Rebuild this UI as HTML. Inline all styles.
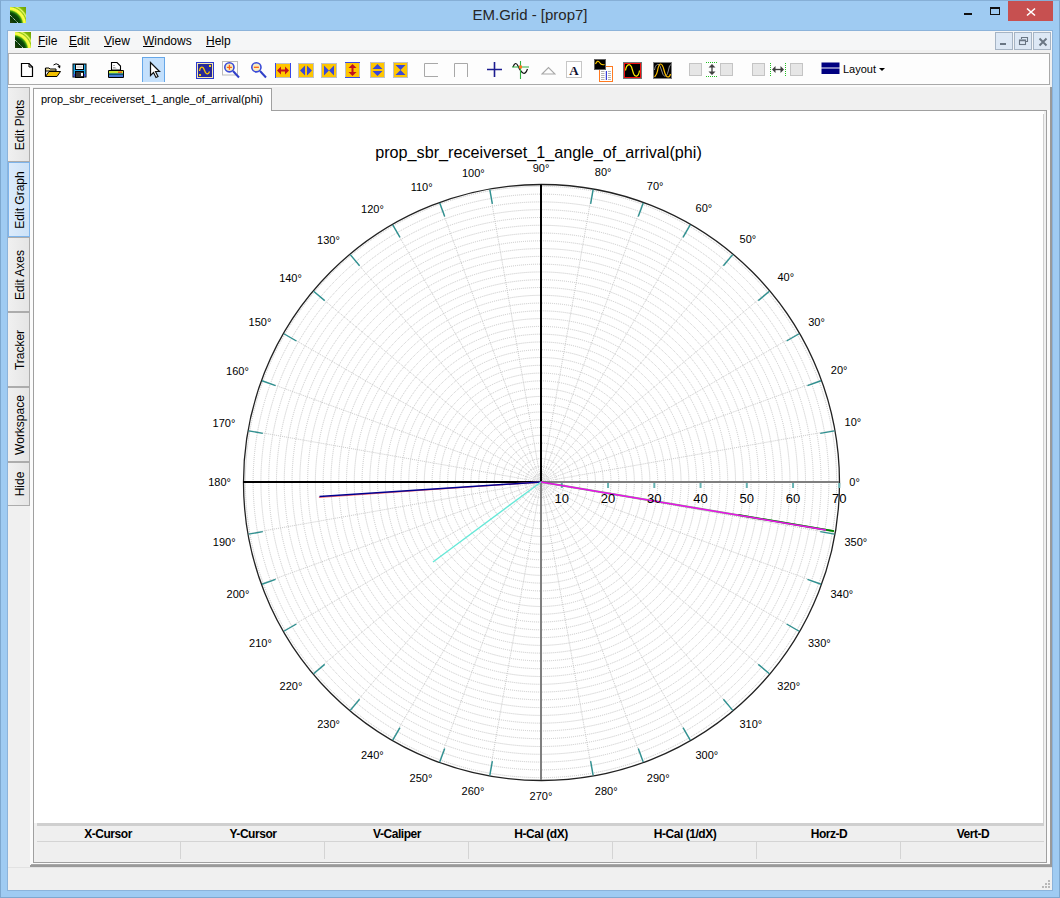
<!DOCTYPE html>
<html><head><meta charset="utf-8">
<style>
*{margin:0;padding:0;box-sizing:border-box}
html,body{width:1060px;height:898px;overflow:hidden;background:#9fcbf2;font-family:"Liberation Sans",sans-serif;position:relative}
.a{position:absolute}
.frame{left:0;top:0;width:1060px;height:898px;border:1px solid #7ea8cf;border-top-color:#86afd6}
.ttl{left:0;top:5px;width:1060px;text-align:center;font-size:15px;color:#262626;line-height:20px;padding-left:0}
.client{left:8px;top:31px;width:1044px;height:859px;background:#f0f0f0}
.menubar{left:8px;top:31px;width:1044px;height:19px;background:#f5f6f7}
.menu span{position:absolute;top:34px;font-size:12px;color:#000;line-height:14px}
.menu u{text-decoration:underline;text-underline-offset:1px;text-decoration-thickness:1px}
.toolbar{left:8px;top:53px;width:1042px;height:32px;background:#fdfdfd;border:1px solid #a9a9a9;border-left-color:#b4b4b4}
.vtab{width:22px;background:linear-gradient(to right,#f0f0f0,#e5e5e5);border:1px solid #acacac;border-left:none}
.vtab span{position:absolute;left:50%;top:50%;transform:translate(-50%,-50%) translateX(1.2px) rotate(-90deg);font-size:12px;white-space:nowrap;color:#000;line-height:14px}
.vtab.sel{background:linear-gradient(to right,#dcebfb,#cde2f7);border:1px solid #7eb4ea}
.hdr span{position:absolute;top:827px;font-size:12px;font-weight:bold;letter-spacing:-0.45px;color:#000;transform:translateX(-50%);white-space:nowrap;line-height:14px}
</style></head><body>
<div class="a frame"></div>
<div class="a ttl">EM.Grid - [prop7]</div>
<div class="a" style="left:7px;top:30px;width:1046px;height:861px;background:#8cb3da"></div>
<div class="a client"></div>
<div class="a menubar"></div>
<div class="a" style="left:1008px;top:1px;width:45px;height:20px;background:#c75050"></div>
<svg class="a" style="left:1026px;top:7px" width="10" height="10" viewBox="0 0 10 10"><path d="M1 1.5L9 8.5M9 1.5L1 8.5" stroke="#fff" stroke-width="1.6"/></svg>
<div class="a" style="left:964px;top:13px;width:8px;height:2px;background:#111"></div>
<div class="a" style="left:990px;top:7px;width:10px;height:8px;border:1px solid #111;border-top-width:2px"></div>
<!-- MDI buttons -->
<div class="a" style="left:995px;top:32px;width:18px;height:18px;background:#dde8f5;border:1px solid #a6b4c4"></div>
<div class="a" style="left:1014px;top:32px;width:18px;height:18px;background:#dde8f5;border:1px solid #a6b4c4"></div>
<div class="a" style="left:1033px;top:32px;width:18px;height:18px;background:#dde8f5;border:1px solid #a6b4c4"></div>
<div class="a" style="left:1000px;top:43px;width:6px;height:2px;background:#6a7684"></div>
<svg class="a" style="left:1018px;top:36px" width="11" height="11" viewBox="0 0 11 11"><path d="M3.5 3V1.5H9.5V5.5H7.5" fill="none" stroke="#6a7684" stroke-width="1.1"/><rect x="1.5" y="4" width="6" height="4.5" fill="none" stroke="#6a7684" stroke-width="1.1"/><path d="M1.5 4.6H7.5" stroke="#6a7684" stroke-width="1.3"/></svg>
<svg class="a" style="left:1038px;top:37px" width="10" height="10" viewBox="0 0 10 10"><path d="M1.5 1.5L8.5 8.5M8.5 1.5L1.5 8.5" stroke="#6a7684" stroke-width="1.9"/></svg>
<!-- grip -->
<svg class="a" style="left:1042px;top:880px" width="10" height="10" viewBox="0 0 10 10"><g fill="#b8b8b8"><rect x="6" y="0" width="2" height="2"/><rect x="3" y="3" width="2" height="2"/><rect x="6" y="3" width="2" height="2"/><rect x="0" y="6" width="2" height="2"/><rect x="3" y="6" width="2" height="2"/><rect x="6" y="6" width="2" height="2"/></g></svg>

<div class="menu">
<span style="left:38px"><u>F</u>ile</span>
<span style="left:69px"><u>E</u>dit</span>
<span style="left:104px"><u>V</u>iew</span>
<span style="left:143px"><u>W</u>indows</span>
<span style="left:206px"><u>H</u>elp</span>
</div>
<div class="a toolbar"></div>
<!-- app icons -->
<svg class="a" style="left:10px;top:7px" width="16" height="16" viewBox="0 0 16 16"><defs><radialGradient id="gi" cx="-2" cy="18" r="26" gradientUnits="userSpaceOnUse"><stop offset="0" stop-color="#3a4a10"/><stop offset="0.3" stop-color="#063806"/><stop offset="0.48" stop-color="#0a4a0a"/><stop offset="0.55" stop-color="#40a010"/><stop offset="0.6" stop-color="#f0f838"/><stop offset="0.67" stop-color="#ffff50"/><stop offset="0.72" stop-color="#90c818"/><stop offset="0.76" stop-color="#e8f868"/><stop offset="0.82" stop-color="#80b808"/><stop offset="1" stop-color="#6a9a00"/></radialGradient></defs><rect width="16" height="16" fill="url(#gi)"/><path d="M0 8 L8 16" stroke="#fff" stroke-width="1" stroke-dasharray="1 1"/></svg>
<svg class="a" style="left:15px;top:32px" width="16" height="16" viewBox="0 0 16 16"><rect width="16" height="16" fill="url(#gi)"/><path d="M0 8 L8 16" stroke="#fff" stroke-width="1" stroke-dasharray="1 1"/></svg>
<!-- new -->
<svg class="a" style="left:20px;top:62px" width="14" height="16" viewBox="0 0 14 16"><path d="M1.5 1.5 H9 L12.5 5 V14.5 H1.5 Z" fill="#fff" stroke="#000" stroke-width="1.2"/><path d="M9 1.5 V5 H12.5" fill="none" stroke="#000" stroke-width="1"/></svg>
<!-- open -->
<svg class="a" style="left:44px;top:62px" width="18" height="16" viewBox="0 0 18 16"><path d="M1.5 6 H5 L6 7 H12 V9 H1.5 Z" fill="#f4e6a0" stroke="#000" stroke-width="1"/><path d="M1.5 14.5 V6" stroke="#000" stroke-width="1.2"/><path d="M1.5 14.5 L5 9.5 H16.5 L13 14.5 Z" fill="#f2c000" stroke="#000" stroke-width="1"/><path d="M9.5 3 Q12 0.5 15 3 L15.5 5" fill="none" stroke="#000" stroke-width="1"/><path d="M13.5 4.5 L16 6.5 L16.5 3.5 Z" fill="#000"/></svg>
<!-- save -->
<svg class="a" style="left:72px;top:63px" width="15" height="15" viewBox="0 0 15 15"><rect x="0.5" y="0.5" width="14" height="14" fill="#000"/><rect x="1.5" y="1.5" width="12" height="12" fill="#1ea7e8"/><rect x="1.5" y="11" width="12" height="2.5" fill="#4848d8"/><rect x="3.5" y="1.5" width="8" height="5" fill="#fff" stroke="#000" stroke-width="1"/><rect x="4.5" y="2.5" width="6" height="2.5" fill="#d8d8d8"/><rect x="3.5" y="8.5" width="8" height="6" fill="#333" stroke="#000" stroke-width="1"/><rect x="9" y="10" width="2" height="3" fill="#fff"/></svg>
<!-- print -->
<svg class="a" style="left:107px;top:61px" width="18" height="18" viewBox="0 0 18 18"><path d="M4.5 1.5 H10 L13.5 5 V9 H4.5 Z" fill="#fff" stroke="#000" stroke-width="1.1"/><path d="M6 4.5h2M6 6.5h2.5M6 8h3.5" stroke="#999" stroke-width="0.8"/><rect x="1" y="9" width="16" height="8" rx="1" fill="#000"/><rect x="2" y="10" width="14" height="2.5" fill="#c8e830"/><rect x="11" y="10.5" width="4" height="1.5" fill="#f06020"/><rect x="2" y="12.5" width="14" height="1" fill="#1ea7e8"/><rect x="2" y="14" width="14" height="2" fill="#4878d8"/></svg>
<!-- pointer button -->
<div class="a" style="left:142px;top:57px;width:23px;height:25px;background:#c4e0fc;border:1px solid #66a7e8;border-bottom:none"></div>
<svg class="a" style="left:148px;top:61px" width="14" height="19" viewBox="0 0 14 19"><path d="M2.5 1.5 V14.5 L5.5 11.5 L8 16.5 L10 15.5 L7.5 10.5 H11.5 Z" fill="#fff" stroke="#111" stroke-width="1.2" stroke-linejoin="miter"/></svg>
<!-- sine display -->
<svg class="a" style="left:196px;top:62px" width="18" height="17" viewBox="0 0 18 17"><rect x="0" y="0" width="18" height="17" fill="#2c3cd0"/><rect x="1" y="1" width="16" height="15" fill="#f5e7ac"/><rect x="2" y="2" width="14" height="13" fill="#27299a"/><path d="M3.5 9 C4 5.5 5.5 4.5 7 5.5 C8 6.5 8.5 8.5 9.5 10.5 C10.5 12.5 12.5 12.5 13.5 9.5" fill="none" stroke="#ffc800" stroke-width="1.3"/><rect x="13" y="3" width="2" height="2" fill="#ffd000"/><rect x="3" y="12" width="2" height="2" fill="#ffd000"/></svg>
<!-- zoom in -->
<svg class="a" style="left:222px;top:61px" width="19" height="19" viewBox="0 0 19 19"><rect x="0.5" y="0.5" width="15" height="13.5" fill="none" stroke="#bcbcbc" stroke-width="1"/><circle cx="7.4" cy="6.3" r="4.6" fill="#f6ecc0" stroke="#3a4ad8" stroke-width="1.6"/><path d="M7.4 3.8V8.8M4.9 6.3H9.9" stroke="#ff6010" stroke-width="1.3"/><path d="M11 10 L17 16.5" stroke="#3040c8" stroke-width="2"/></svg>
<!-- zoom out -->
<svg class="a" style="left:249px;top:61px" width="19" height="19" viewBox="0 0 19 19"><circle cx="7.4" cy="6.3" r="4.6" fill="#f6ecc0" stroke="#3a4ad8" stroke-width="1.6"/><path d="M4.9 6.3H9.9" stroke="#ff6010" stroke-width="1.3"/><path d="M11 10 L17 16.5" stroke="#3040c8" stroke-width="2"/></svg>
<!-- orange icons -->
<svg class="a" style="left:275px;top:63px" width="16" height="15" viewBox="0 0 16 15"><rect x="0.5" y="0.5" width="15" height="14" fill="#ffc600" stroke="#c0c0c8"/><path d="M0.5 0V15M15.5 0V15" stroke="#3848e8" stroke-width="1"/><path d="M2 7.5 L6 3.5 V6.5 H10 V3.5 L14 7.5 L10 11.5 V8.5 H6 V11.5 Z" fill="#c01020"/></svg>
<svg class="a" style="left:298px;top:63px" width="16" height="15" viewBox="0 0 16 15"><rect x="0.5" y="0.5" width="15" height="14" fill="#ffc600" stroke="#c0c0c8"/><path d="M2 7.5 L7 2.5 V12.5 Z M14 7.5 L9 2.5 V12.5 Z" fill="#3a48d8"/></svg>
<svg class="a" style="left:321px;top:63px" width="16" height="15" viewBox="0 0 16 15"><rect x="0.5" y="0.5" width="15" height="14" fill="#ffc600" stroke="#c0c0c8"/><path d="M3 2.5 L8 7.5 L3 12.5 Z M13 2.5 L8 7.5 L13 12.5 Z" fill="#3a48d8"/></svg>
<svg class="a" style="left:345px;top:62px" width="15" height="16" viewBox="0 0 15 16"><rect x="0.5" y="0.5" width="14" height="15" fill="#ffc600" stroke="#c0c0c8"/><path d="M0 0.5H15M0 15.5H15" stroke="#3848e8" stroke-width="1"/><path d="M7.5 2 L3.5 6 H6.5 V10 H3.5 L7.5 14 L11.5 10 H8.5 V6 H11.5 Z" fill="#c01020"/></svg>
<svg class="a" style="left:370px;top:62px" width="15" height="16" viewBox="0 0 15 16"><rect x="0.5" y="0.5" width="14" height="15" fill="#ffc600" stroke="#c0c0c8"/><path d="M7.5 2 L12.5 7 H2.5 Z M7.5 14 L12.5 9 H2.5 Z" fill="#3a48d8"/></svg>
<svg class="a" style="left:393px;top:62px" width="15" height="16" viewBox="0 0 15 16"><rect x="0.5" y="0.5" width="14" height="15" fill="#ffc600" stroke="#c0c0c8"/><path d="M2.5 3 H12.5 L7.5 8 Z M2.5 13 H12.5 L7.5 8 Z" fill="#3a48d8"/></svg>
<!-- brackets -->
<svg class="a" style="left:424px;top:63px" width="15" height="14" viewBox="0 0 15 14"><path d="M14 0.5 H0.5 V13.5 H14" fill="none" stroke="#a8a8a8" stroke-width="1"/></svg>
<svg class="a" style="left:454px;top:63px" width="15" height="14" viewBox="0 0 15 14"><path d="M0.5 14 V0.5 H13.5 V14" fill="none" stroke="#a8a8a8" stroke-width="1"/></svg>
<!-- plus -->
<svg class="a" style="left:487px;top:62px" width="15" height="15" viewBox="0 0 15 15"><path d="M7.5 0V15M0 7.5H15" stroke="#1c1c90" stroke-width="1.6"/></svg>
<!-- sine with cross -->
<svg class="a" style="left:512px;top:61px" width="18" height="18" viewBox="0 0 18 18"><path d="M1 6 Q3.5 -0.5 6 5 T11 12 Q13.5 13.5 15.5 8" fill="none" stroke="#111" stroke-width="1.2"/><path d="M8.5 0V18M0 6H17" stroke="#30b040" stroke-width="1.1"/><rect x="7" y="4.5" width="3" height="3" fill="#ff7820"/></svg>
<!-- triangle -->
<svg class="a" style="left:541px;top:66px" width="15" height="9" viewBox="0 0 15 9"><path d="M1 8 L7.5 1.5 L14 8 Z" fill="none" stroke="#a8a8a8" stroke-width="1.1"/></svg>
<!-- text A -->
<svg class="a" style="left:566px;top:61px" width="16" height="17" viewBox="0 0 16 17"><rect x="0.5" y="0.5" width="15" height="16" fill="#fff" stroke="#909090" stroke-width="1" stroke-dasharray="1 1"/><text x="8" y="13.5" text-anchor="middle" font-family="Liberation Serif" font-weight="bold" font-size="13" fill="#101030">A</text></svg>
<!-- scope icons -->
<svg class="a" style="left:594px;top:59px" width="20" height="23" viewBox="0 0 20 23"><rect x="5.5" y="7.5" width="13" height="15" fill="#fff" stroke="#ff7a20" stroke-width="1"/><path d="M7 12.5h3.5M7 14.5h3.5M7 16.5h3.5M7 18.5h3.5M7 20.5h3.5M14 12.5h3M14 14.5h3M14 16.5h3M14 18.5h3M14 20.5h3" stroke="#a0a0a0" stroke-width="0.8"/><path d="M12.4 12V21" stroke="#3840d8" stroke-width="1.2"/><rect x="0.5" y="0.5" width="11" height="10" fill="#000" stroke="#606060" stroke-width="1"/><path d="M1.5 5 Q3.5 0.5 5.5 3.5 T10.5 5.5" fill="none" stroke="#ffcc00" stroke-width="1.1"/></svg>
<svg class="a" style="left:623px;top:62px" width="19" height="17" viewBox="0 0 19 17"><rect x="0.5" y="0.5" width="18" height="16" fill="#000" stroke="#707878" stroke-width="1"/><rect x="1.5" y="1.5" width="16" height="14" fill="none" stroke="#f01010" stroke-width="1"/><path d="M2.5 8.5 C3.5 1.5 7 1.5 8.5 5 L10.5 11.5 C12 15.5 15.5 15.5 16.5 8.5" fill="none" stroke="#ffee00" stroke-width="1.2"/></svg>
<svg class="a" style="left:653px;top:62px" width="19" height="17" viewBox="0 0 19 17"><rect x="0.5" y="0.5" width="18" height="16" fill="#000" stroke="#808080" stroke-width="1"/><path d="M1.5 8 C2.5 2 5.5 1 7 4 L10 12.5 C11.5 15.5 14 14 15 10 L16.5 4 C17 3 17.5 2.8 18 3" fill="none" stroke="#909090" stroke-width="1"/><path d="M1.5 15 C3 13 4 12 4.5 9 C5.5 3 6.5 2 7.5 2 C9 2 10 4 11 8 C12.5 14 13.5 15 15 15 C16 15 17 14 17.5 12" fill="none" stroke="#ffc000" stroke-width="1.2"/></svg>
<!-- gray squares -->
<div class="a" style="left:689px;top:63px;width:13px;height:13px;background:#e6e6e6;border:1px solid #c4c4c4"></div>
<div class="a" style="left:720px;top:63px;width:13px;height:13px;background:#e6e6e6;border:1px solid #c4c4c4"></div>
<div class="a" style="left:752px;top:63px;width:13px;height:13px;background:#e6e6e6;border:1px solid #c4c4c4"></div>
<div class="a" style="left:790px;top:63px;width:13px;height:13px;background:#e6e6e6;border:1px solid #c4c4c4"></div>
<svg class="a" style="left:705px;top:61px" width="14" height="17" viewBox="0 0 14 17"><path d="M1 1.5H13M1 15.5H13" stroke="#20c020" stroke-width="1" stroke-dasharray="1 1"/><path d="M7 5V12" stroke="#404040" stroke-width="1.3"/><path d="M3.5 6.5 L7 3 L10.5 6.5 Z M3.5 10.5 L7 14 L10.5 10.5 Z" fill="#404040"/></svg>
<svg class="a" style="left:769px;top:62px" width="18" height="15" viewBox="0 0 18 15"><path d="M1.5 1V14M16.5 1V14" stroke="#20c020" stroke-width="1" stroke-dasharray="1 1"/><path d="M5 7.5H13" stroke="#404040" stroke-width="1.3"/><path d="M6.5 4 L3 7.5 L6.5 11 Z M11.5 4 L15 7.5 L11.5 11 Z" fill="#404040"/></svg>
<!-- layout -->
<svg class="a" style="left:821px;top:62px" width="19" height="13" viewBox="0 0 19 13"><rect x="0.5" y="0.5" width="18" height="5" fill="#000080"/><rect x="0.5" y="6.5" width="18" height="5.5" fill="#000080"/></svg>
<div class="a" style="left:843px;top:62px;font-size:11px;line-height:14px;color:#000">Layout</div>
<svg class="a" style="left:879px;top:68px" width="6" height="4" viewBox="0 0 6 4"><path d="M0 0H6L3 3Z" fill="#000"/></svg>

<!-- left tabs -->
<div class="a" style="left:8px;top:85px;width:22px;height:782px;background:#f0f0f0"></div>
<div class="a" style="left:8px;top:85px;width:1042px;height:3px;background:#fbfbfb"></div>
<div class="a vtab" style="left:8px;top:87px;height:75px"><span>Edit Plots</span></div>
<div class="a vtab sel" style="left:8px;top:162px;height:75px"><span>Edit Graph</span></div>
<div class="a vtab" style="left:8px;top:237px;height:75px"><span>Edit Axes</span></div>
<div class="a vtab" style="left:8px;top:312px;height:75px"><span>Tracker</span></div>
<div class="a vtab" style="left:8px;top:387px;height:75px"><span>Workspace</span></div>
<div class="a vtab" style="left:8px;top:462px;height:44px"><span>Hide</span></div>
<!-- MDI frame -->
<div class="a" style="left:30px;top:87px;width:1022px;height:780px;background:#f0f0f0;border-right:2px solid #9a9a9a;border-bottom:2px solid #9a9a9a"></div>
<div class="a" style="left:30px;top:87px;width:3px;height:778px;background:#fbfbfb"></div>
<div class="a" style="left:1047px;top:110px;width:3px;height:755px;background:#fbfbfb"></div>
<div class="a" style="left:30px;top:863px;width:1020px;height:2px;background:#fbfbfb"></div>
<div class="a" style="left:33px;top:110px;width:1014px;height:753px;background:#f0f0f0;border:1px solid #a0a0a0"></div>
<!-- doc tab strip -->
<div class="a" style="left:33px;top:88px;width:239px;height:23px;background:#fff;border:1px solid #a0a0a0;border-bottom:none"></div>
<div class="a" style="left:41px;top:93px;font-size:11px;line-height:13px;color:#000;white-space:nowrap">prop_sbr_receiverset_1_angle_of_arrival(phi)</div>
<!-- plot area -->
<div class="a" style="left:34px;top:111px;width:1010px;height:712px;background:#fff"></div>
<div class="a" style="left:1043px;top:114px;width:1px;height:709px;background:#d0d0d0"></div>
<svg id="chart" width="1060" height="898" viewBox="0 0 1060 898" style="position:absolute;left:0;top:0">
<g fill="none" stroke="#c6c6c6" stroke-width="1" stroke-dasharray="1 1"><circle cx="541.0" cy="482.0" r="7.78"/><circle cx="541.0" cy="482.0" r="15.56"/><circle cx="541.0" cy="482.0" r="23.34"/><circle cx="541.0" cy="482.0" r="31.12"/><circle cx="541.0" cy="482.0" r="38.90"/><circle cx="541.0" cy="482.0" r="46.68"/><circle cx="541.0" cy="482.0" r="54.46"/><circle cx="541.0" cy="482.0" r="62.24"/><circle cx="541.0" cy="482.0" r="70.02"/><circle cx="541.0" cy="482.0" r="77.80"/><circle cx="541.0" cy="482.0" r="85.58"/><circle cx="541.0" cy="482.0" r="93.36"/><circle cx="541.0" cy="482.0" r="101.14"/><circle cx="541.0" cy="482.0" r="108.92"/><circle cx="541.0" cy="482.0" r="116.70"/><circle cx="541.0" cy="482.0" r="124.48"/><circle cx="541.0" cy="482.0" r="132.26"/><circle cx="541.0" cy="482.0" r="140.04"/><circle cx="541.0" cy="482.0" r="147.82"/><circle cx="541.0" cy="482.0" r="155.60"/><circle cx="541.0" cy="482.0" r="163.38"/><circle cx="541.0" cy="482.0" r="171.16"/><circle cx="541.0" cy="482.0" r="178.94"/><circle cx="541.0" cy="482.0" r="186.72"/><circle cx="541.0" cy="482.0" r="194.50"/><circle cx="541.0" cy="482.0" r="202.28"/><circle cx="541.0" cy="482.0" r="210.06"/><circle cx="541.0" cy="482.0" r="217.84"/><circle cx="541.0" cy="482.0" r="225.62"/><circle cx="541.0" cy="482.0" r="233.40"/><circle cx="541.0" cy="482.0" r="241.18"/><circle cx="541.0" cy="482.0" r="248.96"/><circle cx="541.0" cy="482.0" r="256.74"/><circle cx="541.0" cy="482.0" r="264.52"/><circle cx="541.0" cy="482.0" r="272.30"/><circle cx="541.0" cy="482.0" r="280.08"/><circle cx="541.0" cy="482.0" r="287.86"/><circle cx="541.0" cy="482.0" r="295.64"/></g>
<g stroke="#cacaca" stroke-width="1" stroke-dasharray="1 1"><line x1="541.0" y1="482.0" x2="834.47" y2="430.25"/><line x1="541.0" y1="482.0" x2="821.03" y2="380.08"/><line x1="541.0" y1="482.0" x2="799.08" y2="333.00"/><line x1="541.0" y1="482.0" x2="769.28" y2="290.45"/><line x1="541.0" y1="482.0" x2="732.55" y2="253.72"/><line x1="541.0" y1="482.0" x2="690.00" y2="223.92"/><line x1="541.0" y1="482.0" x2="642.92" y2="201.97"/><line x1="541.0" y1="482.0" x2="592.75" y2="188.53"/><line x1="541.0" y1="482.0" x2="489.25" y2="188.53"/><line x1="541.0" y1="482.0" x2="439.08" y2="201.97"/><line x1="541.0" y1="482.0" x2="392.00" y2="223.92"/><line x1="541.0" y1="482.0" x2="349.45" y2="253.72"/><line x1="541.0" y1="482.0" x2="312.72" y2="290.45"/><line x1="541.0" y1="482.0" x2="282.92" y2="333.00"/><line x1="541.0" y1="482.0" x2="260.97" y2="380.08"/><line x1="541.0" y1="482.0" x2="247.53" y2="430.25"/><line x1="541.0" y1="482.0" x2="247.53" y2="533.75"/><line x1="541.0" y1="482.0" x2="260.97" y2="583.92"/><line x1="541.0" y1="482.0" x2="282.92" y2="631.00"/><line x1="541.0" y1="482.0" x2="312.72" y2="673.55"/><line x1="541.0" y1="482.0" x2="349.45" y2="710.28"/><line x1="541.0" y1="482.0" x2="392.00" y2="740.08"/><line x1="541.0" y1="482.0" x2="439.08" y2="762.03"/><line x1="541.0" y1="482.0" x2="489.25" y2="775.47"/><line x1="541.0" y1="482.0" x2="592.75" y2="775.47"/><line x1="541.0" y1="482.0" x2="642.92" y2="762.03"/><line x1="541.0" y1="482.0" x2="690.00" y2="740.08"/><line x1="541.0" y1="482.0" x2="732.55" y2="710.28"/><line x1="541.0" y1="482.0" x2="769.28" y2="673.55"/><line x1="541.0" y1="482.0" x2="799.08" y2="631.00"/><line x1="541.0" y1="482.0" x2="821.03" y2="583.92"/><line x1="541.0" y1="482.0" x2="834.47" y2="533.75"/></g>
<circle cx="541.5" cy="482.5" r="298.0" fill="none" stroke="#222" stroke-width="1.3"/>
<g stroke="#2f9090" stroke-width="1.4"><line x1="820.20" y1="433.36" x2="834.48" y2="430.84"/><line x1="807.43" y1="385.71" x2="821.06" y2="380.75"/><line x1="786.59" y1="341.00" x2="799.14" y2="333.75"/><line x1="758.29" y1="300.59" x2="769.40" y2="291.27"/><line x1="723.41" y1="265.71" x2="732.73" y2="254.60"/><line x1="683.00" y1="237.41" x2="690.25" y2="224.86"/><line x1="638.29" y1="216.57" x2="643.25" y2="202.94"/><line x1="590.64" y1="203.80" x2="593.16" y2="189.52"/><line x1="492.36" y1="203.80" x2="489.84" y2="189.52"/><line x1="444.71" y1="216.57" x2="439.75" y2="202.94"/><line x1="400.00" y1="237.41" x2="392.75" y2="224.86"/><line x1="359.59" y1="265.71" x2="350.27" y2="254.60"/><line x1="324.71" y1="300.59" x2="313.60" y2="291.27"/><line x1="296.41" y1="341.00" x2="283.86" y2="333.75"/><line x1="275.57" y1="385.71" x2="261.94" y2="380.75"/><line x1="262.80" y1="433.36" x2="248.52" y2="430.84"/><line x1="262.80" y1="531.64" x2="248.52" y2="534.16"/><line x1="275.57" y1="579.29" x2="261.94" y2="584.25"/><line x1="296.41" y1="624.00" x2="283.86" y2="631.25"/><line x1="324.71" y1="664.41" x2="313.60" y2="673.73"/><line x1="359.59" y1="699.29" x2="350.27" y2="710.40"/><line x1="400.00" y1="727.59" x2="392.75" y2="740.14"/><line x1="444.71" y1="748.43" x2="439.75" y2="762.06"/><line x1="492.36" y1="761.20" x2="489.84" y2="775.48"/><line x1="590.64" y1="761.20" x2="593.16" y2="775.48"/><line x1="638.29" y1="748.43" x2="643.25" y2="762.06"/><line x1="683.00" y1="727.59" x2="690.25" y2="740.14"/><line x1="723.41" y1="699.29" x2="732.73" y2="710.40"/><line x1="758.29" y1="664.41" x2="769.40" y2="673.73"/><line x1="786.59" y1="624.00" x2="799.14" y2="631.25"/><line x1="807.43" y1="579.29" x2="821.06" y2="584.25"/><line x1="820.20" y1="531.64" x2="834.48" y2="534.16"/></g>
<line x1="541.0" y1="482.0" x2="541.0" y2="184.5" stroke="#000" stroke-width="2"/>
<line x1="541.0" y1="482.0" x2="243.0" y2="482.0" stroke="#000" stroke-width="2"/>
<line x1="541.0" y1="482.0" x2="541.0" y2="780.0" stroke="#7f7f7f" stroke-width="2"/>
<line x1="541.0" y1="482.0" x2="839.0" y2="482.0" stroke="#7f7f7f" stroke-width="2"/>
<g stroke="#66b3b3" stroke-width="2"><line x1="561.80" y1="483" x2="561.80" y2="488"/><line x1="608.05" y1="483" x2="608.05" y2="488"/><line x1="654.30" y1="483" x2="654.30" y2="488"/><line x1="700.55" y1="483" x2="700.55" y2="488"/><line x1="746.80" y1="483" x2="746.80" y2="488"/><line x1="793.05" y1="483" x2="793.05" y2="488"/><line x1="839.30" y1="483" x2="839.30" y2="488"/></g>
<line x1="541.0" y1="482.0" x2="318.9" y2="497.4" stroke="#ff7070" stroke-width="1.4"/>
<line x1="541.0" y1="482.0" x2="319.5" y2="496.6" stroke="#000090" stroke-width="1.5"/>
<line x1="541.0" y1="482.0" x2="433" y2="562" stroke="#66e8d8" stroke-width="1.4"/>
<line x1="541.0" y1="482.0" x2="834" y2="531.2" stroke="#108010" stroke-width="2" stroke-opacity="0.55"/>
<line x1="738.2" y1="514.9" x2="834" y2="531.2" stroke="#008000" stroke-width="1.8"/>
<line x1="541.0" y1="482.0" x2="826" y2="530" stroke="#ec10ec" stroke-width="1.5"/>
<g font-family="Liberation Sans" font-size="13" fill="#000"><text x="561.80" y="502.5" text-anchor="middle">10</text><text x="608.05" y="502.5" text-anchor="middle">20</text><text x="654.30" y="502.5" text-anchor="middle">30</text><text x="700.55" y="502.5" text-anchor="middle">40</text><text x="746.80" y="502.5" text-anchor="middle">50</text><text x="793.05" y="502.5" text-anchor="middle">60</text><text x="839.30" y="502.5" text-anchor="middle">70</text></g>
<g font-family="Liberation Sans" font-size="11" fill="#000"><text x="849.3" y="486.0" text-anchor="start">0°</text><text x="844.6" y="426.3" text-anchor="start">10°</text><text x="830.8" y="374.3" text-anchor="start">20°</text><text x="808.2" y="325.5" text-anchor="start">30°</text><text x="777.5" y="281.4" text-anchor="start">40°</text><text x="739.6" y="243.3" text-anchor="start">50°</text><text x="695.6" y="212.4" text-anchor="start">60°</text><text x="646.8" y="189.6" text-anchor="start">70°</text><text x="594.8" y="175.7" text-anchor="start">80°</text><text x="541.0" y="172.0" text-anchor="middle">90°</text><text x="484.7" y="176.7" text-anchor="end">100°</text><text x="432.6" y="190.6" text-anchor="end">110°</text><text x="383.8" y="213.3" text-anchor="end">120°</text><text x="339.8" y="244.2" text-anchor="end">130°</text><text x="301.9" y="282.2" text-anchor="end">140°</text><text x="271.3" y="326.2" text-anchor="end">150°</text><text x="248.8" y="375.0" text-anchor="end">160°</text><text x="235.3" y="426.9" text-anchor="end">170°</text><text x="231.0" y="486.0" text-anchor="end">180°</text><text x="235.6" y="545.8" text-anchor="end">190°</text><text x="249.3" y="597.8" text-anchor="end">200°</text><text x="271.8" y="646.5" text-anchor="end">210°</text><text x="302.3" y="690.4" text-anchor="end">220°</text><text x="340.0" y="728.3" text-anchor="end">230°</text><text x="383.7" y="759.0" text-anchor="end">240°</text><text x="432.3" y="781.5" text-anchor="end">250°</text><text x="484.3" y="795.4" text-anchor="end">260°</text><text x="541.0" y="800.0" text-anchor="middle">270°</text><text x="594.8" y="795.4" text-anchor="start">280°</text><text x="646.8" y="781.5" text-anchor="start">290°</text><text x="695.5" y="759.0" text-anchor="start">300°</text><text x="739.4" y="728.3" text-anchor="start">310°</text><text x="777.3" y="690.4" text-anchor="start">320°</text><text x="808.0" y="646.5" text-anchor="start">330°</text><text x="830.5" y="597.8" text-anchor="start">340°</text><text x="844.4" y="545.8" text-anchor="start">350°</text></g>
<text x="538.5" y="158" text-anchor="middle" font-family="Liberation Sans" font-size="16.2" fill="#000">prop_sbr_receiverset_1_angle_of_arrival(phi)</text>
</svg>
<!-- table -->
<div class="a" style="left:37px;top:823px;width:1007px;height:3px;background:#cfcfcf"></div>
<div class="a" style="left:37px;top:826px;width:1007px;height:34px;background:#efefef"></div>
<div class="a" style="left:37px;top:841px;width:1007px;height:1px;background:#d4d4d4"></div>
<div class="hdr">
<span style="left:108px">X-Cursor</span>
<span style="left:253px">Y-Cursor</span>
<span style="left:397px">V-Caliper</span>
<span style="left:541px">H-Cal (dX)</span>
<span style="left:685px">H-Cal (1/dX)</span>
<span style="left:829px">Horz-D</span>
<span style="left:973px">Vert-D</span>
</div>
<div class="a" style="left:180px;top:842px;width:1px;height:17px;background:#d4d4d4"></div><div class="a" style="left:324px;top:842px;width:1px;height:17px;background:#d4d4d4"></div><div class="a" style="left:468px;top:842px;width:1px;height:17px;background:#d4d4d4"></div><div class="a" style="left:612px;top:842px;width:1px;height:17px;background:#d4d4d4"></div><div class="a" style="left:756px;top:842px;width:1px;height:17px;background:#d4d4d4"></div><div class="a" style="left:900px;top:842px;width:1px;height:17px;background:#d4d4d4"></div>
<div class="a" style="left:31px;top:864px;width:1019px;height:1px;background:#a8a8a8"></div>
<!-- status bar -->
<div class="a" style="left:8px;top:867px;width:1044px;height:1px;background:#e2e2e2"></div>
<!-- GRIP -->
</body></html>
